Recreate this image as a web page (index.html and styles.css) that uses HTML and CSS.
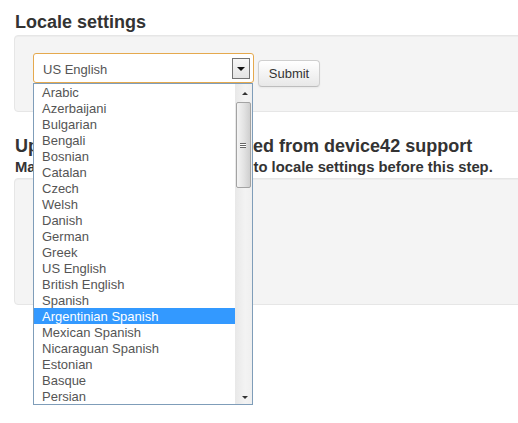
FILE: index.html
```html
<!DOCTYPE html>
<html>
<head>
<meta charset="utf-8">
<link rel="stylesheet" href="styles.css">
</head>
<body>
<div class="page">
  <h1 class="title">Locale settings</h1>
  <div class="well well-locale">
    <form class="locale-form">
      <div class="select">
        <span class="select-value">US English</span>
        <span class="select-btn"><span class="tri-down"></span></span>
        <div class="listbox">
          <ul class="options">
            <li>Arabic</li>
            <li>Azerbaijani</li>
            <li>Bulgarian</li>
            <li>Bengali</li>
            <li>Bosnian</li>
            <li>Catalan</li>
            <li>Czech</li>
            <li>Welsh</li>
            <li>Danish</li>
            <li>German</li>
            <li>Greek</li>
            <li>US English</li>
            <li>British English</li>
            <li>Spanish</li>
            <li class="active">Argentinian Spanish</li>
            <li>Mexican Spanish</li>
            <li>Nicaraguan Spanish</li>
            <li>Estonian</li>
            <li>Basque</li>
            <li>Persian</li>
          </ul>
          <div class="scrollbar">
            <div class="sb-arrow"><span class="sb-up"></span></div>
            <div class="sb-thumb"><span class="grip"></span></div>
            <div class="sb-track"></div>
            <div class="sb-arrow"><span class="sb-down"></span></div>
          </div>
        </div>
      </div>
      <button type="button" class="btn">Submit</button>
    </form>
  </div>
  <h2 class="subtitle">Upload language file, received from device42 support</h2>
  <p class="note">Make sure to save changes made to locale settings before this step.</p>
  <div class="well well-upload"></div>
</div>
</body>
</html>
```

FILE: styles.css
```css
html {
  overflow: hidden;
}
body {
  margin: 0;
  padding: 0;
  min-height: 423px;
  background: #fff;
  font-family: "Liberation Sans", Arial, sans-serif;
  color: #333;
}
.page {
  padding: 12px 0 0 14px;
  width: 640px;
}
.title {
  margin: 0 0 3px;
  padding-left: 1px;
  font-size: 18px;
  line-height: 20px;
  font-weight: bold;
  color: #333;
}
.well {
  background: #f4f4f4;
  border: 1px solid #e6e6e6;
  border-radius: 4px;
  box-shadow: inset 0 1px 1px rgba(0,0,0,0.03);
}
.well-locale {
  padding: 17px 19px 24px 18px;
}
.locale-form {
  display: flex;
  align-items: flex-start;
  margin: 0;
}
.select {
  position: relative;
  box-sizing: border-box;
  width: 221px;
  height: 30px;
  border: 1px solid #e5a94e;
  border-radius: 3px;
  background: #fff;
  display: flex;
  align-items: center;
  padding-left: 9px;
  font-size: 13px;
  color: #555;
}
.select-value {
  flex: 1;
  padding-top: 2px;
}
.select-btn {
  box-sizing: border-box;
  width: 18px;
  height: 21px;
  margin-right: 3px;
  border: 1px solid #737373;
  background: linear-gradient(#f7f7f7, #e4e4e4);
  display: flex;
  align-items: center;
  justify-content: center;
}
.tri-down {
  width: 0;
  height: 0;
  border-left: 4px solid transparent;
  border-right: 4px solid transparent;
  border-top: 4px solid #111;
  margin-top: 1px;
}
.listbox {
  position: absolute;
  top: 29px;
  left: -1px;
  box-sizing: border-box;
  width: 220px;
  height: 322px;
  border: 1px solid #7f9db9;
  background: #fff;
  display: flex;
  z-index: 5;
}
.options {
  list-style: none;
  margin: 0;
  padding: 0;
  flex: 1;
}
.options li {
  box-sizing: border-box;
  height: 16px;
  line-height: 16px;
  padding: 1px 0 0 8px;
  font-size: 13px;
  color: #555;
  white-space: nowrap;
  overflow: hidden;
}
.options li.active {
  background: #3399ff;
  color: #fff;
}
.scrollbar {
  width: 17px;
  display: flex;
  flex-direction: column;
  background: linear-gradient(to right, #e8e8e8, #f3f3f3 60%, #efefef);
}
.sb-arrow {
  height: 17px;
  display: flex;
  align-items: center;
  justify-content: center;
}
.sb-up {
  width: 0;
  height: 0;
  border-left: 3px solid transparent;
  border-right: 3px solid transparent;
  border-bottom: 3px solid #333;
  margin-left: 2px;
  margin-top: 1px;
}
.sb-down {
  width: 0;
  height: 0;
  border-left: 3px solid transparent;
  border-right: 3px solid transparent;
  border-top: 3px solid #333;
  margin-left: 2px;
  margin-top: 4px;
}
.sb-thumb {
  box-sizing: border-box;
  height: 86px;
  margin: 1px 1px 0 1px;
  border: 1px solid #a3a3a3;
  border-radius: 2px;
  background: linear-gradient(to right, #f4f4f4, #e2e2e2 55%, #cfcfcf);
  display: flex;
  align-items: center;
  justify-content: center;
}
.grip {
  width: 6px;
  height: 5px;
  border-top: 1px solid #666;
  border-bottom: 1px solid #666;
  background: linear-gradient(#fff 0, #fff 1px, #666 1px, #666 2px, #fff 2px);
  box-sizing: border-box;
  margin-right: 2px;
}
.sb-track {
  flex: 1;
}
.btn {
  box-sizing: border-box;
  width: 62px;
  height: 27px;
  margin: 7px 0 0 4px;
  padding: 0;
  border: 1px solid #cfcfcf;
  border-bottom-color: #bdbdbd;
  border-radius: 4px;
  background: linear-gradient(#ffffff, #e8e8e8);
  box-shadow: inset 0 1px 0 rgba(255,255,255,0.2), 0 1px 2px rgba(0,0,0,0.05);
  font-family: "Liberation Sans", Arial, sans-serif;
  font-size: 13px;
  color: #333;
}
.subtitle {
  margin: 24px 0 0;
  padding-left: 1px;
  font-size: 18px;
  line-height: 20px;
  font-weight: bold;
  color: #333;
  white-space: nowrap;
}
.note {
  margin: 2px 0 0;
  padding-left: 1px;
  font-size: 14.8px;
  line-height: 18px;
  font-weight: bold;
  color: #333;
  white-space: nowrap;
}
.well-upload {
  margin-top: 2px;
  height: 125px;
}
```
